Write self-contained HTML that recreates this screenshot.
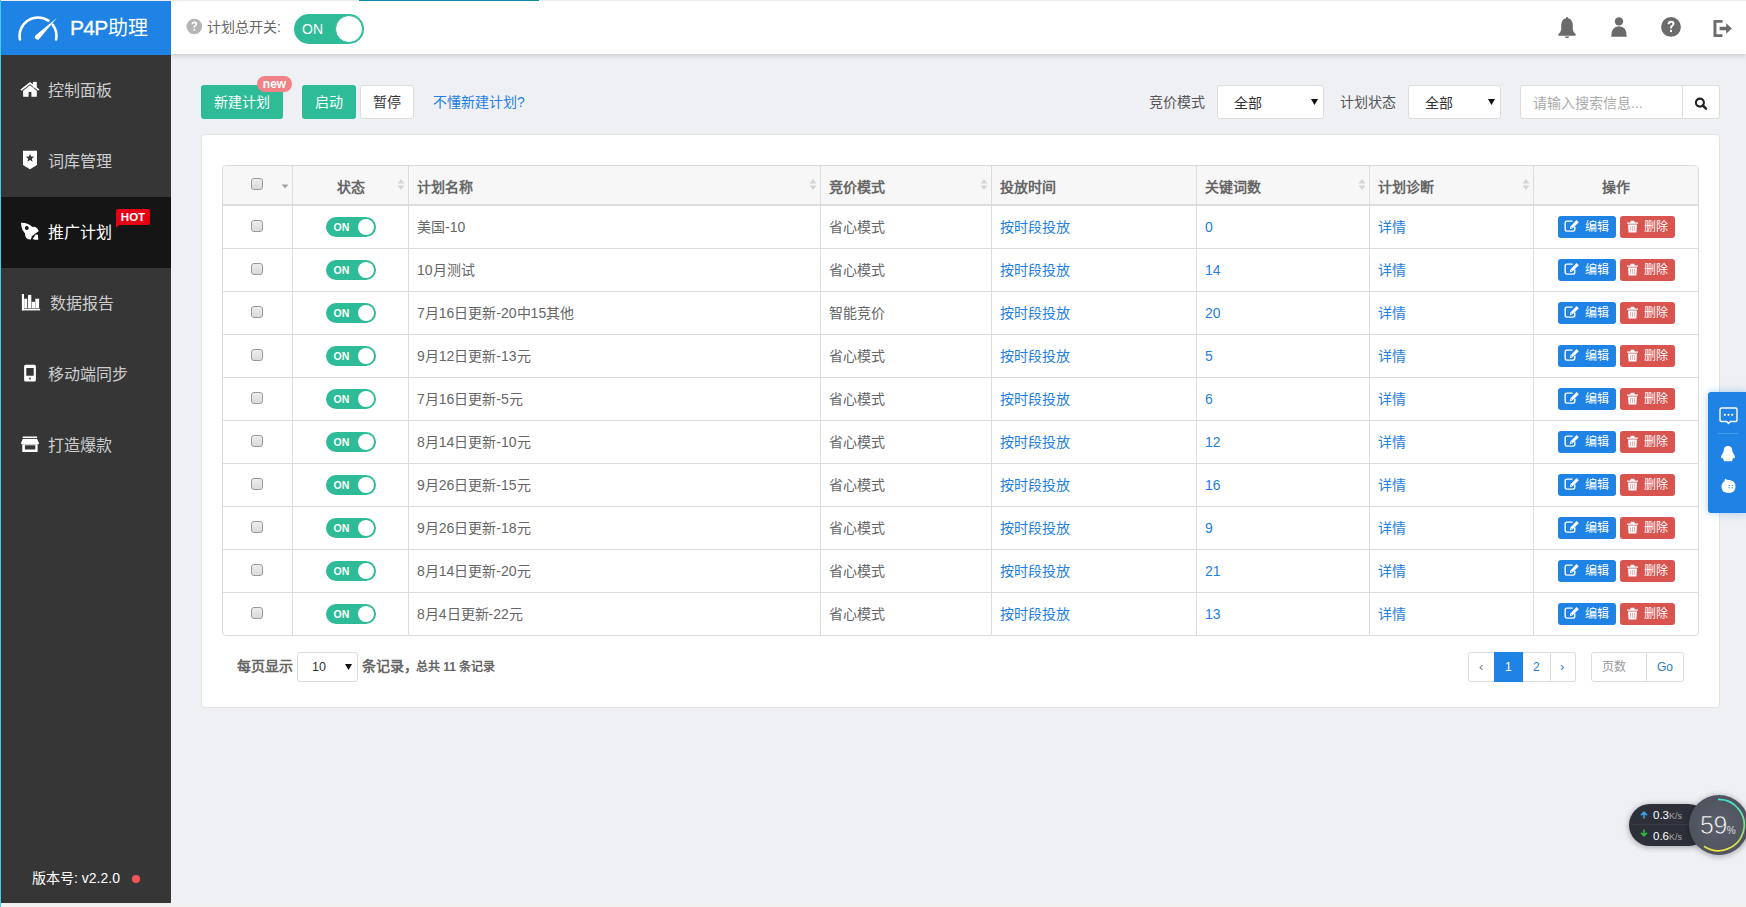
<!DOCTYPE html>
<html lang="zh-CN"><head><meta charset="utf-8">
<style>
*{box-sizing:border-box;margin:0;padding:0}
html,body{width:1746px;height:907px;overflow:hidden}
body{position:relative;background:#eff0f4;font-family:"Liberation Sans",sans-serif;font-size:14px;color:#555}
.a{position:absolute}
#topline{left:0;top:0;width:1746px;height:1px;background:#ececec;z-index:50}
#topline i{position:absolute;left:359px;top:0;width:180px;height:1px;background:#0b8ca9}
#leftline{left:0;top:0;width:1px;height:907px;background:#3fd0ee;z-index:60}
#botstrip{left:0;top:903px;width:1746px;height:4px;background:#f0f0f0;z-index:40}
#side{left:0;top:0;width:171px;height:903px;background:#363636;z-index:20}
#logo{left:0;top:0;width:171px;height:55px;background:#1f82e5}
#logo .t{left:70px;top:13.5px;font-size:20px;color:#fff;line-height:28px;white-space:nowrap}
.nav{left:0;width:171px;height:71px}
.nav.act{background:#151515}
.nav .t{left:48px;top:25px;font-size:16px;color:#cdcdcd;line-height:22px;white-space:nowrap}
.nav.act .t{color:#fff}
.nav svg{position:absolute}
#hot{left:116px;top:209px;width:34px;height:16px;background:#e60012;border-radius:2px;color:#fff;font-size:11.5px;font-weight:bold;line-height:16px;text-align:center}
#ver{left:32px;top:869px;color:#fff;font-size:14px;line-height:18px;white-space:nowrap}
#dot{left:132px;top:875px;width:8px;height:8px;border-radius:50%;background:#f45555}
#hdr{left:171px;top:0;width:1575px;height:54px;background:#fff;box-shadow:0 2px 5px rgba(0,0,0,.17);z-index:10}

.btn{position:absolute;height:34px;border-radius:3px;font-size:14px;line-height:34px;text-align:center;white-space:nowrap}
.g{background:#2dbb98;color:#fff}
.w{background:#fff;color:#333;border:1px solid #ddd;line-height:32px}
.lbl{position:absolute;font-size:14px;color:#555;line-height:20px;white-space:nowrap}
.sel{position:absolute;height:34px;background:#fff;border:1px solid #dcdcdc;border-radius:3px}
.sel .v{position:absolute;font-size:14px;color:#333;line-height:20px;top:7px}
.sel svg{position:absolute}
#card{left:201px;top:134px;width:1519px;height:574px;background:#fff;border:1px solid #e3e3e3;border-radius:4px}

#tbl{left:222px;top:165px;width:1477px;height:471px;border:1px solid #dcdcdc;border-radius:4px;overflow:hidden;background:#fff}
#tbl .hd{position:absolute;left:0;top:0;width:1475px;height:38px;background:#f7f7f7;border-bottom:2px solid #dcdcdc;box-sizing:content-box}
#tbl .vl{position:absolute;top:0;width:1px;height:469px;background:#dcdcdc}
#tbl .hl{position:absolute;left:0;width:1475px;height:1px;background:#dcdcdc}
.th{position:absolute;font-size:14px;font-weight:bold;color:#666;line-height:20px;white-space:nowrap}
.td{position:absolute;font-size:14px;color:#666;line-height:20px;white-space:nowrap}
.bl{color:#1f80e2}
.cb{position:absolute;width:12px;height:12px;border:1px solid #9a9a9a;border-radius:3px;background:linear-gradient(#ededed,#dadada)}
.tg{position:absolute;width:50px;height:20px;border-radius:10px;background:#2dbb98}
.tg i{position:absolute;left:32px;top:2px;width:16px;height:16px;border-radius:50%;background:#fff}
.tg b{position:absolute;left:7.5px;top:3.5px;font-size:10.5px;line-height:12px;color:#fff;font-weight:bold}
.sort{position:absolute}
.eb{position:absolute;height:22px;border-radius:3px;color:#fff;font-size:12px;line-height:22px;white-space:nowrap}
.eb.e{background:#1f82e5;width:58px}
.eb.d{background:#d9534f;width:55px}
.eb svg{position:absolute}
.eb span{position:absolute;top:0}
</style></head><body>
<div id="topline" class="a"><i></i></div>
<div id="leftline" class="a"></div>
<div id="botstrip" class="a"></div>

<div id="side" class="a">
  <div id="logo" class="a">
    <svg class="a" style="left:18px;top:15px" width="42" height="26" viewBox="0 0 42 26">
      <path d="M1.9 24.4 A18.5 18.5 0 0 1 30.4 5.6" fill="none" stroke="#fff" stroke-width="2.6" stroke-linecap="round"/>
      <path d="M34.6 9.6 A18.5 18.5 0 0 1 38.1 24.4" fill="none" stroke="#fff" stroke-width="2.6" stroke-linecap="round"/>
      <path d="M17.4 20.4 L39 2.8 L21.6 23.6 A2.2 2.2 0 0 1 17.4 20.4 Z" fill="#fff"/>
    </svg>
    <div class="a t"><span style="font-size:21px;letter-spacing:-0.7px;-webkit-text-stroke:0.3px #fff">P4P</span>助理</div>
  </div>
  <div class="a nav" style="top:55px"><div class="a t">控制面板</div></div>
  <div class="a nav" style="top:126px"><div class="a t">词库管理</div></div>
  <div class="a nav act" style="top:197px"><div class="a t">推广计划</div></div>
  <div class="a nav" style="top:268px"><div class="a t" style="left:50px">数据报告</div></div>
  <div class="a nav" style="top:339px"><div class="a t">移动端同步</div></div>
  <div class="a nav" style="top:410px"><div class="a t">打造爆款</div></div>

  <svg class="a" style="left:20px;top:81px" width="20" height="17" viewBox="0 0 20 17">
    <path d="M0.4 8.4 L10 1 L19.5 8.4 L18.3 9.7 L10 3.3 L1.6 9.7 Z" fill="#fff"/>
    <rect x="12.9" y="0.9" width="3.9" height="5.5" fill="#fff"/>
    <path d="M3.1 9.7 L10 4.3 L16.8 9.7 V15.8 H11.4 V11 H8.6 V15.8 H3.1 Z" fill="#fff"/>
  </svg>
  <svg class="a" style="left:22px;top:150px" width="16" height="20" viewBox="0 0 16 20">
    <path d="M1 0.8 H15 V14.9 L8 19.2 L1 14.9 Z" fill="#fff"/>
    <path d="M8 3.7 L9.1 6.6 L12.2 6.7 L9.8 8.7 L10.6 11.8 L8 10.1 L5.4 11.8 L6.2 8.7 L3.8 6.7 L6.9 6.6 Z" fill="#363636"/>
  </svg>
  <svg class="a" style="left:20px;top:222px" width="20" height="19" viewBox="0 0 20 19">
    <path d="M1 0.7 Q5 0.6 8 2 Q10.5 3.3 12.3 4.9 Q15.3 4.6 17 6.3 Q18.4 7.8 18.7 9.3 L15.3 11.4 L11.9 14.3 L10.8 17.6 Q8 17.7 6.2 15.9 Q5 14.3 5 11.4 Q2 8.4 1.4 4.6 Z" fill="#fff"/>
    <circle cx="6.8" cy="6" r="1.9" fill="#151515"/>
    <path d="M12.6 16.9 L15.6 12.6 L17.9 12.7 L18.3 17.7 L14.6 17.8 Z" fill="#fff"/>
  </svg>
  <svg class="a" style="left:21px;top:293px" width="20" height="19" viewBox="0 0 20 19">
    <rect x="0.9" y="1" width="2.1" height="16.3" fill="#fff"/>
    <rect x="0.9" y="15.8" width="18.2" height="1.6" fill="#fff"/>
    <rect x="3.2" y="5.7" width="3" height="9.6" fill="#fff"/>
    <rect x="7" y="1.9" width="3.3" height="13.4" fill="#fff"/>
    <rect x="10.7" y="8.8" width="3.3" height="6.5" fill="#fff"/>
    <rect x="14.3" y="5.7" width="3.8" height="9.6" fill="#fff"/>
  </svg>
  <svg class="a" style="left:23px;top:364px" width="14" height="19" viewBox="0 0 14 19">
    <path d="M2.6 0.8 H11.4 Q12.9 0.8 12.9 2.3 V15.9 Q12.9 17.4 11.4 17.4 H2.6 Q1.1 17.4 1.1 15.9 V2.3 Q1.1 0.8 2.6 0.8 Z M3.3 4.1 V11.7 H10.7 V4.1 Z" fill="#fff" fill-rule="evenodd"/>
    <circle cx="7" cy="14.5" r="0.9" fill="#363636"/>
  </svg>
  <svg class="a" style="left:21px;top:435px" width="19" height="18" viewBox="0 0 19 18">
    <rect x="1.7" y="1.5" width="14.4" height="1.6" fill="#fff"/>
    <path d="M1.7 4 H16.1 L18 8.1 Q18 9.4 17 9.4 H1 Q0 9.4 0 8.1 Z" fill="#fff"/>
    <path d="M1.3 9.4 H16.6 V17 H1.3 Z M3.9 10.3 V14.6 H14.3 V10.3 Z" fill="#fff" fill-rule="evenodd"/>
  </svg>
  <div id="hot" class="a">HOT</div><svg class="a" style="left:116px;top:223px" width="6" height="5" viewBox="0 0 6 5"><path d="M0 0 H5.5 L0 4.8 Z" fill="#e60012"/></svg>
  <div id="ver" class="a">版本号: v2.2.0</div>
  <div id="dot" class="a"></div>
</div>


<div id="hdr" class="a">
  <svg class="a" style="left:15px;top:18px" width="17" height="17" viewBox="0 0 17 17">
    <circle cx="8.3" cy="8.5" r="7.8" fill="#b5b5b5"/>
    <path d="M5.6 6.3 Q5.6 3.6 8.4 3.6 Q11.2 3.6 11.2 6 Q11.2 7.4 9.6 8.3 Q9.1 8.6 9.1 9.8 H7.5 Q7.4 8 8.6 7.3 Q9.5 6.8 9.5 6.1 Q9.5 5.2 8.4 5.2 Q7.3 5.2 7.3 6.3 Z" fill="#fff"/>
    <rect x="7.5" y="11" width="1.7" height="1.8" fill="#fff"/>
  </svg>
  <div class="lbl" style="left:36px;top:17px;color:#666">计划总开关:</div>
  <div class="a" style="left:123px;top:14px;width:70px;height:30px;border-radius:15px;background:#2dbb98">
    <div class="a" style="left:41px;top:1px;width:28px;height:28px;border-radius:50%;background:#fff;border:1px solid #2dbb98"></div>
    <div class="a" style="left:8px;top:5px;font-size:14px;line-height:20px;color:#fff">ON</div>
  </div>
  <svg class="a" style="left:1386px;top:16px" width="20" height="23" viewBox="0 0 20 23">
    <path d="M10 1 Q11 1 11.2 2.3 Q15.5 3.3 15.8 9 V13.5 Q16.2 16.5 18.6 18 V19.8 H1.4 V18 Q3.8 16.5 4.2 13.5 V9 Q4.5 3.3 8.8 2.3 Q9 1 10 1 Z" fill="#6b6b6b"/>
    <path d="M7.6 20.6 H12.4 Q11.8 22.2 10 22.2 Q8.2 22.2 7.6 20.6 Z" fill="#6b6b6b"/>
  </svg>
  <svg class="a" style="left:1439px;top:16px" width="18" height="22" viewBox="0 0 18 22">
    <circle cx="9" cy="5.4" r="4.2" fill="#6b6b6b"/>
    <path d="M1.3 20.8 Q1 10.5 9 10.3 Q17 10.5 16.7 20.8 Z" fill="#6b6b6b"/>
  </svg>
  <svg class="a" style="left:1489px;top:16px" width="22" height="22" viewBox="0 0 22 22">
    <circle cx="11" cy="10.9" r="9.9" fill="#6b6b6b"/>
    <path d="M7.6 8.2 Q7.6 4.8 11.1 4.8 Q14.5 4.8 14.5 7.8 Q14.5 9.5 12.6 10.5 Q12 10.9 12 12.4 H10 Q9.9 10.2 11.3 9.3 Q12.4 8.7 12.4 7.9 Q12.4 6.7 11.1 6.7 Q9.7 6.7 9.7 8.2 Z" fill="#fff"/>
    <rect x="10" y="13.9" width="2" height="2.2" fill="#fff"/>
  </svg>
  <svg class="a" style="left:1541px;top:19px" width="21" height="19" viewBox="0 0 21 19">
    <path d="M1.5 1 H10.5 V3.7 H4.4 V15.3 H10.5 V18 H1.5 Z" fill="#6b6b6b"/>
    <path d="M7.6 7.7 H14.2 V4.2 L19.8 9.5 L14.2 14.8 V11.3 H7.6 Z" fill="#6b6b6b"/>
  </svg>
</div>

<div class="btn g" style="left:201px;top:85px;width:82px">新建计划</div>
<div class="a" style="left:257px;top:76px;width:35px;height:16px;border-radius:8px;background:#f08185;color:#fff;font-size:12px;font-weight:bold;line-height:17px;text-align:center">new</div>
<div class="btn g" style="left:302px;top:85px;width:54px">启动</div>
<div class="btn w" style="left:360px;top:85px;width:54px">暂停</div>
<div class="lbl" style="left:433px;top:92px;color:#1f80e2">不懂新建计划?</div>

<div class="lbl" style="left:1149px;top:92px">竞价模式</div>
<div class="sel" style="left:1217px;top:85px;width:107px">
  <div class="v" style="left:16px">全部</div>
  <svg style="left:93px;top:13px" width="7" height="6" viewBox="0 0 7 6"><path d="M0 0 H7 L3.5 6 Z" fill="#111"/></svg>
</div>
<div class="lbl" style="left:1340px;top:92px">计划状态</div>
<div class="sel" style="left:1408px;top:85px;width:93px">
  <div class="v" style="left:16px">全部</div>
  <svg style="left:79px;top:13px" width="7" height="6" viewBox="0 0 7 6"><path d="M0 0 H7 L3.5 6 Z" fill="#111"/></svg>
</div>
<div class="sel" style="left:1520px;top:85px;width:200px">
  <div class="v" style="left:12px;color:#aaa">请输入搜索信息...</div>
  <div class="a" style="left:161px;top:0;width:1px;height:32px;background:#dcdcdc"></div>
  <svg style="left:173px;top:11px" width="15" height="14" viewBox="0 0 15 14">
    <circle cx="5.9" cy="5.6" r="4" fill="none" stroke="#222" stroke-width="2.1"/>
    <path d="M8.8 8.5 L12 11.7" stroke="#222" stroke-width="2.5" stroke-linecap="round"/>
  </svg>
</div>

<div id="card" class="a"></div>
<div id="tbl" class="a">
<div class="hd"></div>
<div class="vl" style="left:69px"></div>
<div class="vl" style="left:185px"></div>
<div class="vl" style="left:597px"></div>
<div class="vl" style="left:768px"></div>
<div class="vl" style="left:973px"></div>
<div class="vl" style="left:1146px"></div>
<div class="vl" style="left:1310px"></div>
<div class="hl" style="top:82px"></div>
<div class="hl" style="top:125px"></div>
<div class="hl" style="top:168px"></div>
<div class="hl" style="top:211px"></div>
<div class="hl" style="top:254px"></div>
<div class="hl" style="top:297px"></div>
<div class="hl" style="top:340px"></div>
<div class="hl" style="top:383px"></div>
<div class="hl" style="top:426px"></div>
<div class="cb" style="left:28px;top:12px"></div>
<svg class="sort" style="left:58px;top:18px" width="8" height="5" viewBox="0 0 8 5"><path d="M0.5 0.5 H7.5 L4 4.3 Z" fill="#a3a3a3"/></svg>
<div class="th" style="left:114px;top:11px">状态</div>
<div class="sort" style="left:174px;top:11px"><svg width="8" height="11" viewBox="0 0 8 11"><path d="M4 0 L7.5 4.5 H0.5 Z M4 11 L7.5 6.5 H0.5 Z" fill="#d5d5d5"/></svg></div>
<div class="th" style="left:194px;top:11px">计划名称</div>
<div class="sort" style="left:586px;top:11px"><svg width="8" height="11" viewBox="0 0 8 11"><path d="M4 0 L7.5 4.5 H0.5 Z M4 11 L7.5 6.5 H0.5 Z" fill="#d5d5d5"/></svg></div>
<div class="th" style="left:606px;top:11px">竞价模式</div>
<div class="sort" style="left:757px;top:11px"><svg width="8" height="11" viewBox="0 0 8 11"><path d="M4 0 L7.5 4.5 H0.5 Z M4 11 L7.5 6.5 H0.5 Z" fill="#d5d5d5"/></svg></div>
<div class="th" style="left:777px;top:11px">投放时间</div>
<div class="th" style="left:982px;top:11px">关键词数</div>
<div class="sort" style="left:1135px;top:11px"><svg width="8" height="11" viewBox="0 0 8 11"><path d="M4 0 L7.5 4.5 H0.5 Z M4 11 L7.5 6.5 H0.5 Z" fill="#d5d5d5"/></svg></div>
<div class="th" style="left:1155px;top:11px">计划诊断</div>
<div class="sort" style="left:1299px;top:11px"><svg width="8" height="11" viewBox="0 0 8 11"><path d="M4 0 L7.5 4.5 H0.5 Z M4 11 L7.5 6.5 H0.5 Z" fill="#d5d5d5"/></svg></div>
<div class="th" style="left:1379px;top:11px">操作</div>
<div class="cb" style="left:28px;top:54px"></div>
<div class="tg" style="left:103px;top:51px"><b>ON</b><i></i></div>
<div class="td" style="left:194px;top:51px">美国-10</div>
<div class="td" style="left:606px;top:51px">省心模式</div>
<div class="td bl" style="left:777px;top:51px">按时段投放</div>
<div class="td bl" style="left:982px;top:51px">0</div>
<div class="td bl" style="left:1155px;top:51px">详情</div>
<div class="eb e" style="left:1335px;top:50px"><svg style="left:6px;top:3px" width="16" height="14" viewBox="0 0 16 14"><path d="M8.6 2.1 H3 Q1.2 2.1 1.2 3.9 V10.3 Q1.2 12.1 3 12.1 H9 Q10.8 12.1 10.8 10.3 V7.6" fill="none" stroke="#fff" stroke-width="1.4"/><path d="M12.6 1 L14.8 3.2 L8.4 9.6 L5.8 10.2 L6.4 7.6 Z" fill="#fff"/><path d="M7.2 8.2 L8.6 9.3" stroke="#1f82e5" stroke-width="0.7"/></svg><span style="left:27px">编辑</span></div>
<div class="eb d" style="left:1397px;top:50px"><svg style="left:5.5px;top:3.5px" width="13" height="13" viewBox="0 0 13 13"><path d="M1 2.4 H4.2 L4.8 0.8 H8.2 L8.8 2.4 H12 V3.8 H1 Z" fill="#fff"/><path d="M2 4.6 H11 L10.4 12.4 H2.6 Z" fill="#fff"/><path d="M4.6 6 V11 M6.5 6 V11 M8.4 6 V11" stroke="#e8a09e" stroke-width="0.8"/></svg><span style="left:24px">删除</span></div>
<div class="cb" style="left:28px;top:97px"></div>
<div class="tg" style="left:103px;top:94px"><b>ON</b><i></i></div>
<div class="td" style="left:194px;top:94px">10月测试</div>
<div class="td" style="left:606px;top:94px">省心模式</div>
<div class="td bl" style="left:777px;top:94px">按时段投放</div>
<div class="td bl" style="left:982px;top:94px">14</div>
<div class="td bl" style="left:1155px;top:94px">详情</div>
<div class="eb e" style="left:1335px;top:93px"><svg style="left:6px;top:3px" width="16" height="14" viewBox="0 0 16 14"><path d="M8.6 2.1 H3 Q1.2 2.1 1.2 3.9 V10.3 Q1.2 12.1 3 12.1 H9 Q10.8 12.1 10.8 10.3 V7.6" fill="none" stroke="#fff" stroke-width="1.4"/><path d="M12.6 1 L14.8 3.2 L8.4 9.6 L5.8 10.2 L6.4 7.6 Z" fill="#fff"/><path d="M7.2 8.2 L8.6 9.3" stroke="#1f82e5" stroke-width="0.7"/></svg><span style="left:27px">编辑</span></div>
<div class="eb d" style="left:1397px;top:93px"><svg style="left:5.5px;top:3.5px" width="13" height="13" viewBox="0 0 13 13"><path d="M1 2.4 H4.2 L4.8 0.8 H8.2 L8.8 2.4 H12 V3.8 H1 Z" fill="#fff"/><path d="M2 4.6 H11 L10.4 12.4 H2.6 Z" fill="#fff"/><path d="M4.6 6 V11 M6.5 6 V11 M8.4 6 V11" stroke="#e8a09e" stroke-width="0.8"/></svg><span style="left:24px">删除</span></div>
<div class="cb" style="left:28px;top:140px"></div>
<div class="tg" style="left:103px;top:137px"><b>ON</b><i></i></div>
<div class="td" style="left:194px;top:137px">7月16日更新-20中15其他</div>
<div class="td" style="left:606px;top:137px">智能竞价</div>
<div class="td bl" style="left:777px;top:137px">按时段投放</div>
<div class="td bl" style="left:982px;top:137px">20</div>
<div class="td bl" style="left:1155px;top:137px">详情</div>
<div class="eb e" style="left:1335px;top:136px"><svg style="left:6px;top:3px" width="16" height="14" viewBox="0 0 16 14"><path d="M8.6 2.1 H3 Q1.2 2.1 1.2 3.9 V10.3 Q1.2 12.1 3 12.1 H9 Q10.8 12.1 10.8 10.3 V7.6" fill="none" stroke="#fff" stroke-width="1.4"/><path d="M12.6 1 L14.8 3.2 L8.4 9.6 L5.8 10.2 L6.4 7.6 Z" fill="#fff"/><path d="M7.2 8.2 L8.6 9.3" stroke="#1f82e5" stroke-width="0.7"/></svg><span style="left:27px">编辑</span></div>
<div class="eb d" style="left:1397px;top:136px"><svg style="left:5.5px;top:3.5px" width="13" height="13" viewBox="0 0 13 13"><path d="M1 2.4 H4.2 L4.8 0.8 H8.2 L8.8 2.4 H12 V3.8 H1 Z" fill="#fff"/><path d="M2 4.6 H11 L10.4 12.4 H2.6 Z" fill="#fff"/><path d="M4.6 6 V11 M6.5 6 V11 M8.4 6 V11" stroke="#e8a09e" stroke-width="0.8"/></svg><span style="left:24px">删除</span></div>
<div class="cb" style="left:28px;top:183px"></div>
<div class="tg" style="left:103px;top:180px"><b>ON</b><i></i></div>
<div class="td" style="left:194px;top:180px">9月12日更新-13元</div>
<div class="td" style="left:606px;top:180px">省心模式</div>
<div class="td bl" style="left:777px;top:180px">按时段投放</div>
<div class="td bl" style="left:982px;top:180px">5</div>
<div class="td bl" style="left:1155px;top:180px">详情</div>
<div class="eb e" style="left:1335px;top:179px"><svg style="left:6px;top:3px" width="16" height="14" viewBox="0 0 16 14"><path d="M8.6 2.1 H3 Q1.2 2.1 1.2 3.9 V10.3 Q1.2 12.1 3 12.1 H9 Q10.8 12.1 10.8 10.3 V7.6" fill="none" stroke="#fff" stroke-width="1.4"/><path d="M12.6 1 L14.8 3.2 L8.4 9.6 L5.8 10.2 L6.4 7.6 Z" fill="#fff"/><path d="M7.2 8.2 L8.6 9.3" stroke="#1f82e5" stroke-width="0.7"/></svg><span style="left:27px">编辑</span></div>
<div class="eb d" style="left:1397px;top:179px"><svg style="left:5.5px;top:3.5px" width="13" height="13" viewBox="0 0 13 13"><path d="M1 2.4 H4.2 L4.8 0.8 H8.2 L8.8 2.4 H12 V3.8 H1 Z" fill="#fff"/><path d="M2 4.6 H11 L10.4 12.4 H2.6 Z" fill="#fff"/><path d="M4.6 6 V11 M6.5 6 V11 M8.4 6 V11" stroke="#e8a09e" stroke-width="0.8"/></svg><span style="left:24px">删除</span></div>
<div class="cb" style="left:28px;top:226px"></div>
<div class="tg" style="left:103px;top:223px"><b>ON</b><i></i></div>
<div class="td" style="left:194px;top:223px">7月16日更新-5元</div>
<div class="td" style="left:606px;top:223px">省心模式</div>
<div class="td bl" style="left:777px;top:223px">按时段投放</div>
<div class="td bl" style="left:982px;top:223px">6</div>
<div class="td bl" style="left:1155px;top:223px">详情</div>
<div class="eb e" style="left:1335px;top:222px"><svg style="left:6px;top:3px" width="16" height="14" viewBox="0 0 16 14"><path d="M8.6 2.1 H3 Q1.2 2.1 1.2 3.9 V10.3 Q1.2 12.1 3 12.1 H9 Q10.8 12.1 10.8 10.3 V7.6" fill="none" stroke="#fff" stroke-width="1.4"/><path d="M12.6 1 L14.8 3.2 L8.4 9.6 L5.8 10.2 L6.4 7.6 Z" fill="#fff"/><path d="M7.2 8.2 L8.6 9.3" stroke="#1f82e5" stroke-width="0.7"/></svg><span style="left:27px">编辑</span></div>
<div class="eb d" style="left:1397px;top:222px"><svg style="left:5.5px;top:3.5px" width="13" height="13" viewBox="0 0 13 13"><path d="M1 2.4 H4.2 L4.8 0.8 H8.2 L8.8 2.4 H12 V3.8 H1 Z" fill="#fff"/><path d="M2 4.6 H11 L10.4 12.4 H2.6 Z" fill="#fff"/><path d="M4.6 6 V11 M6.5 6 V11 M8.4 6 V11" stroke="#e8a09e" stroke-width="0.8"/></svg><span style="left:24px">删除</span></div>
<div class="cb" style="left:28px;top:269px"></div>
<div class="tg" style="left:103px;top:266px"><b>ON</b><i></i></div>
<div class="td" style="left:194px;top:266px">8月14日更新-10元</div>
<div class="td" style="left:606px;top:266px">省心模式</div>
<div class="td bl" style="left:777px;top:266px">按时段投放</div>
<div class="td bl" style="left:982px;top:266px">12</div>
<div class="td bl" style="left:1155px;top:266px">详情</div>
<div class="eb e" style="left:1335px;top:265px"><svg style="left:6px;top:3px" width="16" height="14" viewBox="0 0 16 14"><path d="M8.6 2.1 H3 Q1.2 2.1 1.2 3.9 V10.3 Q1.2 12.1 3 12.1 H9 Q10.8 12.1 10.8 10.3 V7.6" fill="none" stroke="#fff" stroke-width="1.4"/><path d="M12.6 1 L14.8 3.2 L8.4 9.6 L5.8 10.2 L6.4 7.6 Z" fill="#fff"/><path d="M7.2 8.2 L8.6 9.3" stroke="#1f82e5" stroke-width="0.7"/></svg><span style="left:27px">编辑</span></div>
<div class="eb d" style="left:1397px;top:265px"><svg style="left:5.5px;top:3.5px" width="13" height="13" viewBox="0 0 13 13"><path d="M1 2.4 H4.2 L4.8 0.8 H8.2 L8.8 2.4 H12 V3.8 H1 Z" fill="#fff"/><path d="M2 4.6 H11 L10.4 12.4 H2.6 Z" fill="#fff"/><path d="M4.6 6 V11 M6.5 6 V11 M8.4 6 V11" stroke="#e8a09e" stroke-width="0.8"/></svg><span style="left:24px">删除</span></div>
<div class="cb" style="left:28px;top:312px"></div>
<div class="tg" style="left:103px;top:309px"><b>ON</b><i></i></div>
<div class="td" style="left:194px;top:309px">9月26日更新-15元</div>
<div class="td" style="left:606px;top:309px">省心模式</div>
<div class="td bl" style="left:777px;top:309px">按时段投放</div>
<div class="td bl" style="left:982px;top:309px">16</div>
<div class="td bl" style="left:1155px;top:309px">详情</div>
<div class="eb e" style="left:1335px;top:308px"><svg style="left:6px;top:3px" width="16" height="14" viewBox="0 0 16 14"><path d="M8.6 2.1 H3 Q1.2 2.1 1.2 3.9 V10.3 Q1.2 12.1 3 12.1 H9 Q10.8 12.1 10.8 10.3 V7.6" fill="none" stroke="#fff" stroke-width="1.4"/><path d="M12.6 1 L14.8 3.2 L8.4 9.6 L5.8 10.2 L6.4 7.6 Z" fill="#fff"/><path d="M7.2 8.2 L8.6 9.3" stroke="#1f82e5" stroke-width="0.7"/></svg><span style="left:27px">编辑</span></div>
<div class="eb d" style="left:1397px;top:308px"><svg style="left:5.5px;top:3.5px" width="13" height="13" viewBox="0 0 13 13"><path d="M1 2.4 H4.2 L4.8 0.8 H8.2 L8.8 2.4 H12 V3.8 H1 Z" fill="#fff"/><path d="M2 4.6 H11 L10.4 12.4 H2.6 Z" fill="#fff"/><path d="M4.6 6 V11 M6.5 6 V11 M8.4 6 V11" stroke="#e8a09e" stroke-width="0.8"/></svg><span style="left:24px">删除</span></div>
<div class="cb" style="left:28px;top:355px"></div>
<div class="tg" style="left:103px;top:352px"><b>ON</b><i></i></div>
<div class="td" style="left:194px;top:352px">9月26日更新-18元</div>
<div class="td" style="left:606px;top:352px">省心模式</div>
<div class="td bl" style="left:777px;top:352px">按时段投放</div>
<div class="td bl" style="left:982px;top:352px">9</div>
<div class="td bl" style="left:1155px;top:352px">详情</div>
<div class="eb e" style="left:1335px;top:351px"><svg style="left:6px;top:3px" width="16" height="14" viewBox="0 0 16 14"><path d="M8.6 2.1 H3 Q1.2 2.1 1.2 3.9 V10.3 Q1.2 12.1 3 12.1 H9 Q10.8 12.1 10.8 10.3 V7.6" fill="none" stroke="#fff" stroke-width="1.4"/><path d="M12.6 1 L14.8 3.2 L8.4 9.6 L5.8 10.2 L6.4 7.6 Z" fill="#fff"/><path d="M7.2 8.2 L8.6 9.3" stroke="#1f82e5" stroke-width="0.7"/></svg><span style="left:27px">编辑</span></div>
<div class="eb d" style="left:1397px;top:351px"><svg style="left:5.5px;top:3.5px" width="13" height="13" viewBox="0 0 13 13"><path d="M1 2.4 H4.2 L4.8 0.8 H8.2 L8.8 2.4 H12 V3.8 H1 Z" fill="#fff"/><path d="M2 4.6 H11 L10.4 12.4 H2.6 Z" fill="#fff"/><path d="M4.6 6 V11 M6.5 6 V11 M8.4 6 V11" stroke="#e8a09e" stroke-width="0.8"/></svg><span style="left:24px">删除</span></div>
<div class="cb" style="left:28px;top:398px"></div>
<div class="tg" style="left:103px;top:395px"><b>ON</b><i></i></div>
<div class="td" style="left:194px;top:395px">8月14日更新-20元</div>
<div class="td" style="left:606px;top:395px">省心模式</div>
<div class="td bl" style="left:777px;top:395px">按时段投放</div>
<div class="td bl" style="left:982px;top:395px">21</div>
<div class="td bl" style="left:1155px;top:395px">详情</div>
<div class="eb e" style="left:1335px;top:394px"><svg style="left:6px;top:3px" width="16" height="14" viewBox="0 0 16 14"><path d="M8.6 2.1 H3 Q1.2 2.1 1.2 3.9 V10.3 Q1.2 12.1 3 12.1 H9 Q10.8 12.1 10.8 10.3 V7.6" fill="none" stroke="#fff" stroke-width="1.4"/><path d="M12.6 1 L14.8 3.2 L8.4 9.6 L5.8 10.2 L6.4 7.6 Z" fill="#fff"/><path d="M7.2 8.2 L8.6 9.3" stroke="#1f82e5" stroke-width="0.7"/></svg><span style="left:27px">编辑</span></div>
<div class="eb d" style="left:1397px;top:394px"><svg style="left:5.5px;top:3.5px" width="13" height="13" viewBox="0 0 13 13"><path d="M1 2.4 H4.2 L4.8 0.8 H8.2 L8.8 2.4 H12 V3.8 H1 Z" fill="#fff"/><path d="M2 4.6 H11 L10.4 12.4 H2.6 Z" fill="#fff"/><path d="M4.6 6 V11 M6.5 6 V11 M8.4 6 V11" stroke="#e8a09e" stroke-width="0.8"/></svg><span style="left:24px">删除</span></div>
<div class="cb" style="left:28px;top:441px"></div>
<div class="tg" style="left:103px;top:438px"><b>ON</b><i></i></div>
<div class="td" style="left:194px;top:438px">8月4日更新-22元</div>
<div class="td" style="left:606px;top:438px">省心模式</div>
<div class="td bl" style="left:777px;top:438px">按时段投放</div>
<div class="td bl" style="left:982px;top:438px">13</div>
<div class="td bl" style="left:1155px;top:438px">详情</div>
<div class="eb e" style="left:1335px;top:437px"><svg style="left:6px;top:3px" width="16" height="14" viewBox="0 0 16 14"><path d="M8.6 2.1 H3 Q1.2 2.1 1.2 3.9 V10.3 Q1.2 12.1 3 12.1 H9 Q10.8 12.1 10.8 10.3 V7.6" fill="none" stroke="#fff" stroke-width="1.4"/><path d="M12.6 1 L14.8 3.2 L8.4 9.6 L5.8 10.2 L6.4 7.6 Z" fill="#fff"/><path d="M7.2 8.2 L8.6 9.3" stroke="#1f82e5" stroke-width="0.7"/></svg><span style="left:27px">编辑</span></div>
<div class="eb d" style="left:1397px;top:437px"><svg style="left:5.5px;top:3.5px" width="13" height="13" viewBox="0 0 13 13"><path d="M1 2.4 H4.2 L4.8 0.8 H8.2 L8.8 2.4 H12 V3.8 H1 Z" fill="#fff"/><path d="M2 4.6 H11 L10.4 12.4 H2.6 Z" fill="#fff"/><path d="M4.6 6 V11 M6.5 6 V11 M8.4 6 V11" stroke="#e8a09e" stroke-width="0.8"/></svg><span style="left:24px">删除</span></div>
</div>
<div class="th" style="left:237px;top:656px;color:#666">每页显示</div>
<div class="sel" style="left:297px;top:652px;width:61px;height:30px">
  <div class="v" style="left:14px;top:4px;font-size:12.5px;color:#333">10</div>
  <svg style="left:47px;top:11px" width="7" height="6" viewBox="0 0 7 6"><path d="M0 0 H7 L3.5 6 Z" fill="#111"/></svg>
</div>
<div class="th" style="left:362px;top:656px;color:#666">条记录，</div><div class="th" style="left:416px;top:657px;color:#666;font-size:12px">总共 11 条记录</div>
<div class="a" style="left:1468px;top:652px;width:108px;height:30px;border:1px solid #ddd;border-radius:3px;background:#fff">
  <div class="a" style="left:25px;top:-1px;width:29px;height:30px;background:#1f82e5"></div>
  <div class="a" style="left:81px;top:0;width:1px;height:28px;background:#ddd"></div>
  <div class="a" style="left:10px;top:5px;font-size:13px;line-height:18px;color:#777">‹</div>
  <div class="a" style="left:36px;top:5px;font-size:12px;line-height:18px;color:#fff">1</div>
  <div class="a" style="left:64px;top:5px;font-size:12px;line-height:18px;color:#1f80e2">2</div>
  <div class="a" style="left:91px;top:5px;font-size:13px;line-height:18px;color:#1f80e2">›</div>
</div>
<div class="a" style="left:1591px;top:652px;width:93px;height:30px;border:1px solid #ddd;border-radius:3px;background:#fff">
  <div class="a" style="left:54px;top:0;width:1px;height:28px;background:#ddd"></div>
  <div class="a" style="left:10px;top:5px;font-size:12px;line-height:18px;color:#999">页数</div>
  <div class="a" style="left:65px;top:5px;font-size:12px;line-height:18px;color:#337ab7">Go</div>
</div>


<div class="a" style="left:1708px;top:392px;width:40px;height:121px;background:#1f82e5;border-radius:3px;box-shadow:0 0 8px rgba(30,130,229,.35);z-index:30">
  <svg class="a" style="left:11px;top:15px" width="19" height="18" viewBox="0 0 19 18">
    <path d="M2.5 1 H16.5 Q18 1 18 2.5 V13 Q18 14.5 16.5 14.5 H11.3 L9.5 16.5 L7.7 14.5 H2.5 Q1 14.5 1 13 V2.5 Q1 1 2.5 1 Z" fill="none" stroke="#fff" stroke-width="1.4"/>
    <circle cx="5.8" cy="7.8" r="1.1" fill="#fff"/><circle cx="9.5" cy="7.8" r="1.1" fill="#fff"/><circle cx="13.2" cy="7.8" r="1.1" fill="#fff"/>
  </svg>
  <div class="a" style="left:10px;top:41px;width:20px;height:1px;background:#4a9bea"></div>
  <svg class="a" style="left:12px;top:53px" width="16" height="17" viewBox="0 0 16 17">
    <path d="M8 1 Q12.2 1 12.4 6 Q12.6 7.2 13.5 8.5 Q15.5 11 14.8 13.2 Q14.3 13.6 13.4 12.6 Q13 14.6 12 15.3 Q13 16 12 16.3 H4 Q3 16 4 15.3 Q3 14.6 2.6 12.6 Q1.7 13.6 1.2 13.2 Q0.5 11 2.5 8.5 Q3.4 7.2 3.6 6 Q3.8 1 8 1 Z" fill="#fff"/>
  </svg>
  <svg class="a" style="left:12px;top:85px" width="17" height="17" viewBox="0 0 17 17">
    <path d="M5 1.5 Q7 3 8.5 3 Q15.5 3 15.5 9.8 Q15.5 16 8.5 16 Q1.5 16 1.5 9.8 Q1.5 6 4.5 4.2 Z" fill="#fff"/>
    <path d="M8.6 8.5 L10 8.5 M8.6 10.8 L10 10.8 M11.8 8.5 L13 8.5 M11.8 10.8 L13 10.8" stroke="#1f82e5" stroke-width="0.9"/>
  </svg>
</div>

<div class="a" style="left:1629px;top:804px;width:80px;height:42px;border-radius:21px;background:#2d3039;box-shadow:0 1px 6px rgba(0,0,0,.35);z-index:31">
  <div class="a" style="left:2px;top:20px;width:70px;height:1px;background:#3a3d47"></div>
  <svg class="a" style="left:11px;top:7px" width="8" height="8" viewBox="0 0 8 8"><path d="M4 7.5 V1.5 M1 4.3 L4 1.2 L7 4.3" fill="none" stroke="#3aa8f0" stroke-width="1.5"/></svg>
  <svg class="a" style="left:11px;top:25px" width="8" height="8" viewBox="0 0 8 8"><path d="M4 0.5 V6.5 M1 3.7 L4 6.8 L7 3.7" fill="none" stroke="#2cc23c" stroke-width="1.5"/></svg>
  <div class="a" style="left:24px;top:5px;font-size:11.5px;line-height:13px;color:#fff;white-space:nowrap">0.3<span style="font-size:9px;color:#a8a8a8">K/s</span></div>
  <div class="a" style="left:24px;top:26px;font-size:11.5px;line-height:13px;color:#fff;white-space:nowrap">0.6<span style="font-size:9px;color:#a8a8a8">K/s</span></div>
</div>
<div class="a" style="left:1689px;top:795px;width:60px;height:60px;border-radius:50%;background:radial-gradient(circle at 50% 50%,#5a5f6b,#4a4e59);box-shadow:0 1px 6px rgba(0,0,0,.35);z-index:32">
  <svg class="a" style="left:0;top:0" width="60" height="60" viewBox="0 0 60 60">
    <defs><linearGradient id="arcg" x1="0" y1="0" x2="0" y2="1"><stop offset="0" stop-color="#3fe3d0"/><stop offset="0.55" stop-color="#7be07a"/><stop offset="1" stop-color="#f0e040"/></linearGradient></defs>
    <path d="M29 4.3 A25.7 25.7 0 1 1 15 51.2" fill="none" stroke="url(#arcg)" stroke-width="1.8"/>
  </svg>
  <div class="a" style="left:11px;top:15px;font-size:25px;line-height:30px;color:#fff;font-weight:normal;letter-spacing:-0.5px;white-space:nowrap;-webkit-text-stroke:0.7px #51555f">59<span style="font-size:10px;-webkit-text-stroke:0.2px #51555f">%</span></div>
</div>
</body></html>
